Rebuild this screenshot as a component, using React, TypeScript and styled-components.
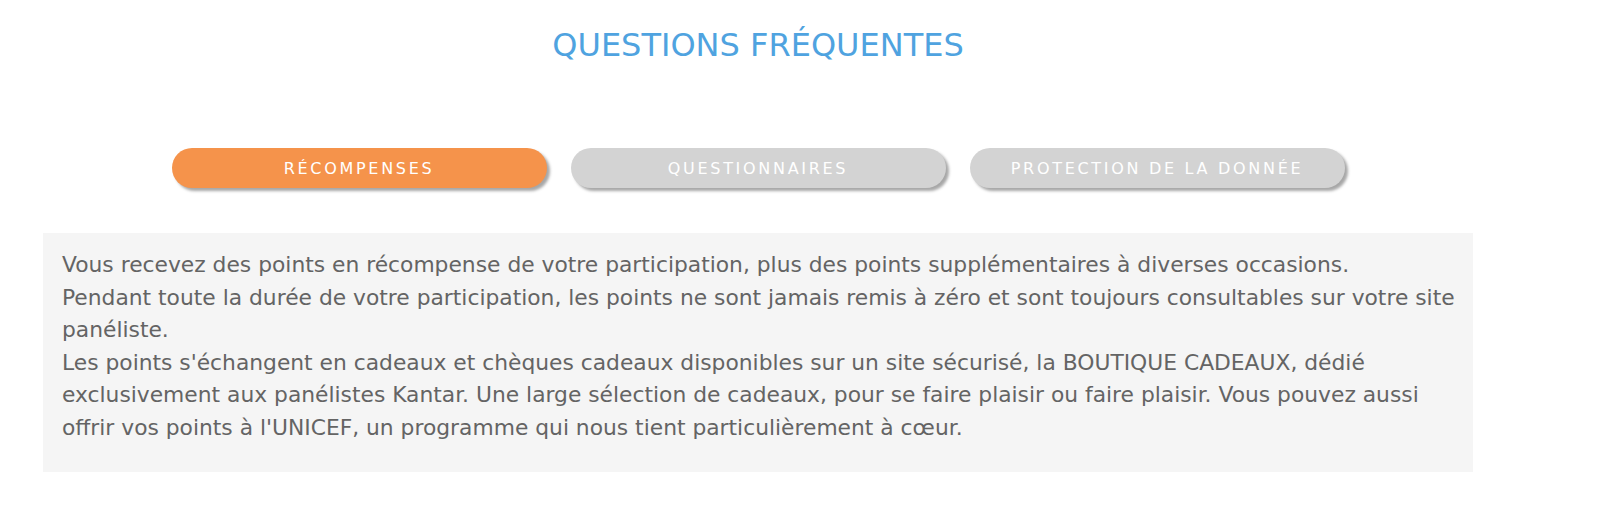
import React, { useState } from 'react';
import styled, { createGlobalStyle } from 'styled-components';

const GlobalStyle = createGlobalStyle`
    html, body {
        margin: 0;
        padding: 0;
        background: #ffffff;
    }
    body {
        font-family: 'DejaVu Sans', 'Liberation Sans', sans-serif;
    }
`;

const tabs = ['Récompenses', 'Questionnaires', 'Protection de la donnée'];

const answers: string[][][] = [
    [
        [
            'Vous recevez des points en récompense de votre participation, plus des points supplémentaires à diverses occasions.',
        ],
        [
            'Pendant toute la durée de votre participation, les points ne sont jamais remis à zéro et sont toujours consultables sur votre site',
            'panéliste.',
        ],
        [
            "Les points s'échangent en cadeaux et chèques cadeaux disponibles sur un site sécurisé, la BOUTIQUE CADEAUX, dédié",
            'exclusivement aux panélistes Kantar. Une large sélection de cadeaux, pour se faire plaisir ou faire plaisir. Vous pouvez aussi',
            "offrir vos points à l'UNICEF, un programme qui nous tient particulièrement à cœur.",
        ],
    ],
    [],
    [],
];

const App = () => {
    const [active, setActive] = useState(0);

    return (
        <>
            <GlobalStyle />
            <Page>
                <Container>
                    <Title>Questions fréquentes</Title>
                    <TabRow>
                        {tabs.map((tab, index) => (
                            <TabButton
                                key={tab}
                                $active={index === active}
                                onClick={() => setActive(index)}
                            >
                                {tab}
                            </TabButton>
                        ))}
                    </TabRow>
                    <Panel>
                        {answers[active].map((paragraph, i) => (
                            <Paragraph key={i}>
                                {paragraph.map((line, j) => (
                                    <React.Fragment key={j}>
                                        {j > 0 && <br />}
                                        {line}
                                    </React.Fragment>
                                ))}
                            </Paragraph>
                        ))}
                    </Panel>
                </Container>
            </Page>
        </>
    );
};

export default App;

const Page = styled.div`
    width: 100%;
    min-height: 507px;
    padding: 27px 0 0 43px;
    box-sizing: border-box;
`;

const Container = styled.div`
    width: 1430px;
    display: flex;
    flex-direction: column;
    align-items: center;
`;

const Title = styled.h1`
    margin: 0;
    font-size: 32px;
    line-height: 36px;
    font-weight: 400;
    color: #4fa3e0;
    text-transform: uppercase;
    text-align: center;
`;

const TabRow = styled.div`
    margin-top: 85px;
    display: flex;
    justify-content: center;
    gap: 24px;
`;

const TabButton = styled.button<{ $active: boolean }>`
    width: 375px;
    height: 40px;
    border: none;
    border-radius: 20px;
    background: ${({ $active }) => ($active ? '#f5934b' : '#d3d3d3')};
    box-shadow: 3px 3px 3px rgba(0, 0, 0, 0.35);
    color: #ffffff;
    font-family: 'DejaVu Sans', 'Liberation Sans', sans-serif;
    font-size: 16px;
    letter-spacing: 2.7px;
    text-transform: uppercase;
    cursor: pointer;
    padding: 0;
`;

const Panel = styled.div`
    margin-top: 45px;
    width: 100%;
    height: 239px;
    box-sizing: border-box;
    padding: 16px 19px 28px;
    background: #f5f5f5;
    color: #646464;
    font-size: 21.8px;
    line-height: 32.5px;
`;

const Paragraph = styled.p`
    margin: 0;
    white-space: nowrap;
`;
